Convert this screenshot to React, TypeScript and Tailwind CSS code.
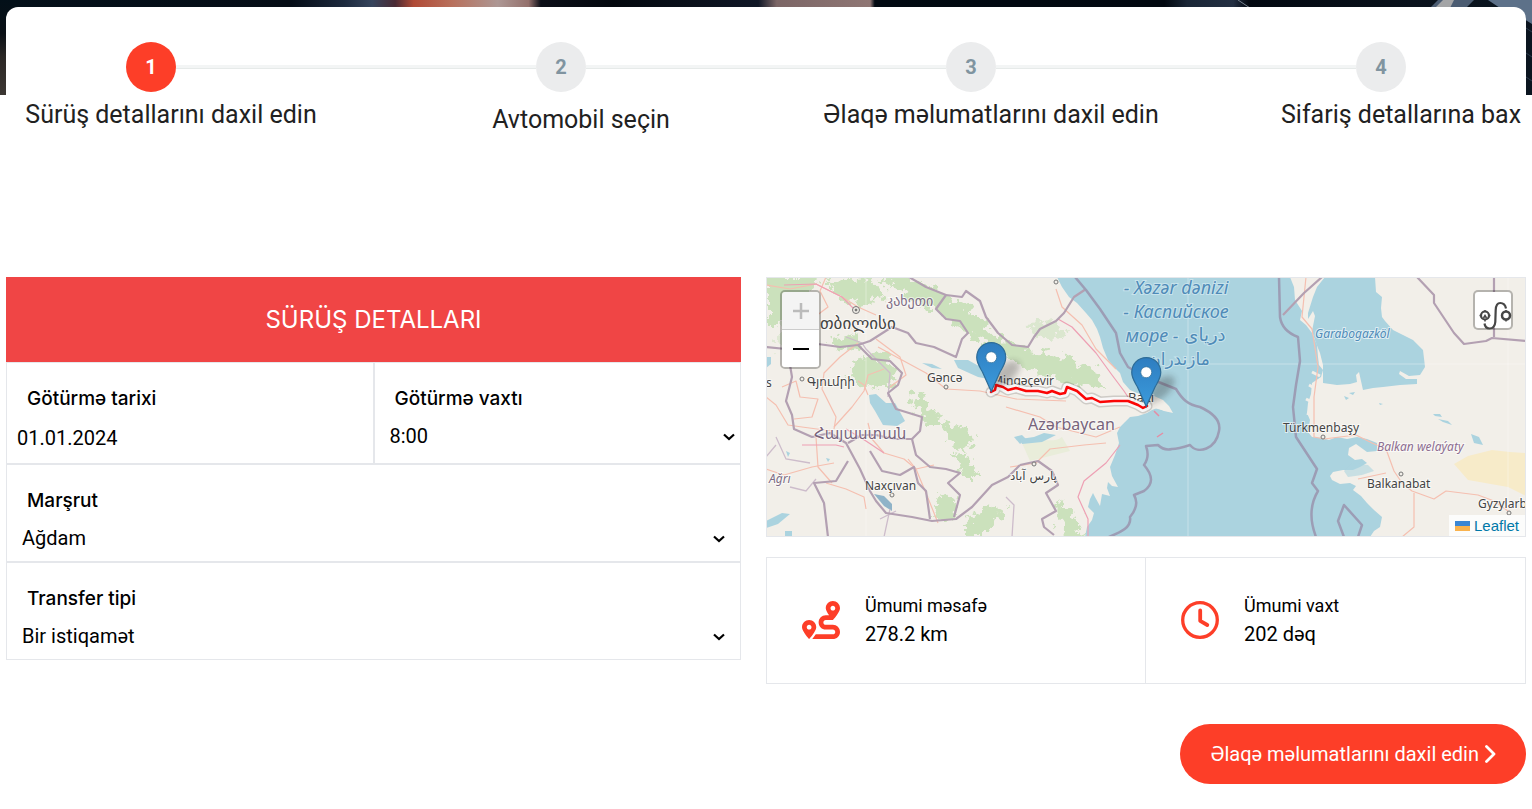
import React, { Fragment } from "react";
import { FaRoute } from "react-icons/fa";

const STEPS = [
  { id: 1, label: "Sürüş detallarını daxil edin", active: true, low: false },
  { id: 2, label: "Avtomobil seçin", active: false, low: true },
  { id: 3, label: "Əlaqə məlumatlarını daxil edin", active: false, low: false },
  { id: 4, label: "Sifariş detallarına bax", active: false, low: false },
];

const ROUTE_PATH =
  "M225 115L229 113 230 108 237 110 242 113 250 111 260 114 272 114 281 116 286 114 294 117 299 116 301 110 311 114 320 122 326 121 334 125 348 124 362 124 372 128 377 131 381 129";

function HeroPhoto() {
  return (
    <svg
      className="absolute inset-x-0 top-0 h-[95px] w-full"
      viewBox="0 0 1532 95"
      preserveAspectRatio="none"
      aria-hidden="true"
    >
      <defs>
        <linearGradient id="cabin" x1="0" x2="1532" y1="0" y2="0" gradientUnits="userSpaceOnUse">
          <stop offset="0" stopColor="#04101a" />
          <stop offset="0.19" stopColor="#050d16" />
          <stop offset="0.225" stopColor="#1d2a3e" />
          <stop offset="0.243" stopColor="#36445c" />
          <stop offset="0.258" stopColor="#4a2a34" />
          <stop offset="0.27" stopColor="#b04a36" />
          <stop offset="0.295" stopColor="#b8705c" />
          <stop offset="0.325" stopColor="#ad9794" />
          <stop offset="0.345" stopColor="#94706c" />
          <stop offset="0.353" stopColor="#0c0f18" />
          <stop offset="0.4" stopColor="#03080e" />
          <stop offset="0.495" stopColor="#101726" />
          <stop offset="0.507" stopColor="#7c6666" />
          <stop offset="0.568" stopColor="#8f7674" />
          <stop offset="0.571" stopColor="#020a12" />
          <stop offset="0.76" stopColor="#020810" />
          <stop offset="0.775" stopColor="#1a2636" />
          <stop offset="0.805" stopColor="#232f42" />
          <stop offset="0.815" stopColor="#020810" />
          <stop offset="0.92" stopColor="#0a121c" />
          <stop offset="1" stopColor="#0b1520" />
        </linearGradient>
        <linearGradient id="seat" x1="0" x2="0" y1="0" y2="95" gradientUnits="userSpaceOnUse">
          <stop offset="0" stopColor="#031019" />
          <stop offset="0.35" stopColor="#0a1016" />
          <stop offset="0.6" stopColor="#2b2725" />
          <stop offset="1" stopColor="#3c3733" />
        </linearGradient>
      </defs>
      <rect width="1532" height="95" fill="url(#cabin)" />
      <rect width="20" height="95" fill="url(#seat)" />
      <path d="M1430 8L1438 0H1474L1466 8Z" fill="#4b5c72" />
      <path d="M1435 8L1443 0H1454L1450 8Z" fill="#a3a4a6" />
      <path d="M1488 0H1532V24L1516 14 1500 8Z" fill="#5d7189" />
      <path d="M1526 28l6 4M1526 53l6 4M1526 77l6 4" stroke="#2c3b4c" strokeWidth="1" />
      <path d="M1238 0l12 8" stroke="#76808c" strokeWidth="1" />
    </svg>
  );
}

function Stepper() {
  return (
    <ol className="flex items-start px-[120px]">
      {STEPS.map((s, i) => (
        <Fragment key={s.id}>
          {i > 0 && (
            <li aria-hidden="true" className="mt-[23px] h-1 flex-1 border-b border-[#e6eae9] bg-[#f3f5f5]" />
          )}
          <li className="flex w-[50px] flex-col items-center">
            <span
              className={
                s.active
                  ? "flex size-[50px] items-center justify-center rounded-full bg-[#fd3e28] text-xl font-bold text-white"
                  : "flex size-[50px] items-center justify-center rounded-full bg-[#ebeced] text-xl font-bold text-[#8094a0]"
              }
            >
              {s.id}
            </span>
            <span
              className={
                s.low
                  ? "mt-3 pl-10 text-[25px] leading-8 whitespace-nowrap text-[#212121]"
                  : "mt-[7px] pl-10 text-[25px] leading-8 whitespace-nowrap text-[#212121]"
              }
            >
              {s.label}
            </span>
          </li>
        </Fragment>
      ))}
    </ol>
  );
}

type SelectFieldProps = { id: string; label: string; options: string[]; wide?: boolean };

function SelectField({ id, label, options, wide }: SelectFieldProps) {
  return (
    <div className={wide ? "border border-[#e5e7eb] px-[15px] pt-[21px] pb-[6px]" : "border border-[#e5e7eb] pr-[5px] pl-[15px] pt-[21px] pb-2"}>
      <label htmlFor={id} className="block pl-[5px] font-['Inter'] text-[19px] leading-[30px] font-medium">
        {label}
      </label>
      <div className="relative mt-[5px]">
        <select id={id} className="block h-[34px] w-full appearance-none bg-white text-xl">
          {options.map((o) => (
            <option key={o}>{o}</option>
          ))}
        </select>
        <svg
          viewBox="0 0 12 8"
          className="pointer-events-none absolute top-[14px] right-0 h-2 w-3"
          fill="none"
          stroke="#000"
          aria-hidden="true"
        >
          <path d="M1 1.500L6 6 11 1.500" strokeWidth="2.200" />
        </svg>
      </div>
    </div>
  );
}

function RideDetails() {
  return (
    <section>
      <h2 className="bg-[#f04545] py-6 text-center font-['Inter'] text-2xl leading-[37px] text-white">
        SÜRÜŞ DETALLARI
      </h2>
      <form className="text-black">
        <div className="grid grid-cols-2">
          <div className="border border-[#e5e7eb] px-[10px] pt-[21px] pb-2">
            <label htmlFor="date" className="block pl-[10px] font-['Inter'] text-[19px] leading-[30px] font-medium">
              Götürmə tarixi
            </label>
            <input id="date" type="text" defaultValue="01.01.2024" className="mt-[7px] block h-[34px] w-full text-xl" />
          </div>
          <SelectField id="time" label="Götürmə vaxtı" options={["8:00", "9:00", "10:00"]} />
        </div>
        <SelectField id="route" label="Marşrut" options={["Ağdam", "Gəncə"]} wide />
        <SelectField id="type" label="Transfer tipi" options={["Bir istiqamət", "İki istiqamət"]} wide />
      </form>
    </section>
  );
}

function Marker({ x, y }: { x: number; y: number }) {
  return (
    <g transform={`translate(${x} ${y}) scale(1.22)`}>
      <path d="M12.5 40.5L17 24c5-7 12-10 17-8 5 3-1 13-9 18z" fill="#222" opacity="0.28" filter="url(#soft)" />
      <path
        d="M12.5.5C5.7.5.6 5.900.6 12.600c0 5 2.800 8.400 4.700 12L12.500 40.500l7.200-15.900c1.900-3.600 4.700-7 4.700-12C24.400 5.900 19.300.5 12.500.5z"
        fill="url(#pin)"
        stroke="#2e6c97"
      />
      <circle cx="12.500" cy="12.500" r="4.500" fill="#fff" stroke="#2e6c97" strokeWidth="0.600" />
    </g>
  );
}

function MapDrawing() {
  return (
    <svg
      className="block h-full w-full font-['Noto_Sans']"
      viewBox="1 1 758 258"
      preserveAspectRatio="xMidYMid slice"
      role="img"
      aria-label="Leaflet"
    >
      <defs>
        <linearGradient id="pin" x1="0" x2="0" y1="0" y2="1">
          <stop offset="0" stopColor="#2e7dc0" />
          <stop offset="1" stopColor="#3b9bdc" />
        </linearGradient>
        <filter id="soft" x="-50%" y="-50%" width="200%" height="200%">
          <feGaussianBlur stdDeviation="2.500" />
        </filter>
        <filter id="rough" x="-5%" y="-5%" width="110%" height="110%">
          <feTurbulence type="fractalNoise" baseFrequency="0.120" numOctaves="4" seed="4" />
          <feDisplacementMap in="SourceGraphic" scale="22" xChannelSelector="R" yChannelSelector="G" />
        </filter>
      </defs>
      <rect width="760" height="260" fill="#f2efe9" />

      <g fill="#c5dfb5" opacity="0.850" filter="url(#rough)">
        <path d="M0 0H52L46 16 28 20 18 44 6 52 0 50Z" />
        <path d="M62 4L104 2 120 20 100 28 74 22Z" />
        <path d="M110 0H150L186 22 210 36 232 60 262 74 300 80 330 92 340 112 300 106 262 94 236 78 204 58 170 36 140 18Z" />
        <path d="M18 42L40 32 48 62 30 78 8 70Z" opacity="0.500" />
        <path d="M64 64L92 54 96 70 70 74Z" />
        <path d="M84 86L118 76 132 92 126 108 104 112 86 104Z" />
        <path d="M142 122L156 112 166 132 178 146 160 146Z" />
        <path d="M176 146L200 150 208 164 196 176 184 166Z" />
        <path d="M188 176L206 182 214 200 198 200Z" />
        <path d="M170 218L190 224 188 246 168 240Z" />
        <path d="M200 244L226 228 240 232 220 258H200Z" />
        <path d="M290 224L304 230 316 260H296Z" />
        <path d="M264 46L290 44 302 60 270 62Z" opacity="0.600" />
      </g>
      <path d="M256 166c14-8 30 2 40-6l8 14-40 10z" fill="#e9edda" />

      <path
        fill="#abd3df"
        d="M291 0L296 10 303 20 311 26 320 36 326 43 331 52 334 60 337 71 342 83 348 90 354 96 357 105 364 113 371 116 379 118 388 119 397 123 403 129 407 136 398 134 391 131 386 133 381 136 372 139 364 140 359 145 354 150 351 156 353 166 349 178 344 190 346 199 352 210 346 209 342 205 341 211 344 219 336 217 334 229 329 220 327 216 324 222 322 230 328 236 326 243 321 250 319 260H604L608 254 614 250 616 240 608 233 601 226 595 219 587 213 590 209 584 206 574 207 566 203 564 199 567 195 577 193 587 193 594 190 601 186 596 182 589 183 582 178 583 171 590 167 601 175 611 174 611 166 601 162 591 160 581 162 571 160 563 163 556 161 546 160 542 155 544 143 541 136 542 126 545 117 546 106 555 100 557 93 553 88 552 80 551 68 546 56 540 48 534 43 536 34 529 23 528 10 524 0Z"
      />
      <path
        fill="#abd3df"
        d="M559 0L551 10 547 20 542 36 542 42 547 34 549 39 546 54 550 66 554 76 557 88 557 106 571 108 584 107 591 105 590 98 593 95 597 113 607 111 617 110 634 108 651 107 651 102 640 102 633 97 634 94 643 99 654 98 659 90 657 73 647 63 637 58 627 53 619 44 616 40 615 31 616 20 610 15 609 0Z"
      />
      <path d="M380 122L388 122 398 127 405 135 396 133 388 131 381 134 374 128Z" fill="#f2efe9" />
      <g fill="#abd3df">
        <path d="M103 118l7-1 10 9 9 0 10 18-8 5-14-1-8-14-5-8z" />
        <path d="M188 83l14 0 18 10 8 10-16-3-20-9z" />
        <path d="M156 86l10 1 10 5-10-1z" />
        <path d="M0 244l16-8 8 1-12 10-12 4z" />
        <path d="M108 217l10 2 8 8 0 7-8-5z" fill="#8fb3c8" />
        <path d="M248 160l8-2 4 4-6 5z" />
        <path d="M254 162l14-2 10-4 12 2-14 7-20 2z" />
        <path d="M0 80h5v7l-5 4zM20 174l4 2-2 4zM60 181l4 1-2 3zM19 254h7v5h-7z" />
        <path d="M578 119l5 2-3 2zM583 116l6-1-2 3zM613 126l4 1-3 1zM667 137h7l2 3-7-1zM672 142l10 2 4 4-9-3zM705 157l8 3 4 8-9-2z" />
        <path d="M586 186l16 2 6 6-12 4-14 2-4-6z" opacity="0.600" />
      </g>
      <path d="M688 187l14-8 24-6 18 2 16 1v43l-18-9-40-7z" fill="#f7ebc9" />
      <path d="M546 95l8 4M543 108l9 5M540 122l8 4M541 136l7 3" stroke="#f2efe9" strokeWidth="3" />

      <g fill="none" stroke="#fff" opacity="0.350">
        <path d="M422 0V260M420 87H760M742 0V260M100 0V260" />
      </g>

      <g fill="none" stroke="#f5bfb0" strokeWidth="1.200" strokeLinejoin="round">
        <path d="M0 8L24 12 50 7 76 20 92 30 110 38" />
        <path d="M60 0L54 14 62 30 46 42 30 50 18 66" />
        <path d="M92 66L74 80 58 96 56 112 70 140 68 152" />
        <path d="M16 110L30 104 34 120 52 122 46 140 28 142" />
        <path d="M68 150L86 130 98 114 102 98 118 92" />
        <path d="M102 118l-4-10-6-4M102 146l4 16 12 14 20 6 12 10 18-4" />
        <path d="M0 120L10 128 22 148 36 150 66 154M0 192L18 198 46 190 68 186" />
        <path d="M60 206L80 212 98 220 100 232M50 160L52 190 66 206" />
        <path d="M110 62L134 80 140 98 124 110M112 70L160 96 180 112 214 114 250 122 300 124" />
        <path d="M142 182L150 192 164 226 172 246M240 130L274 140 290 150 330 160 354 150" />
        <path d="M244 190L270 186 284 172 318 168 340 166" />
        <path d="M290 12L296 30 316 48 330 72 350 92" />
        <path d="M540 0L536 40 546 52 552 90 548 120 548 160 558 162 590 158 606 166 620 172 628 194 636 206 646 214 668 222 680 214 712 218 728 224 742 234" />
        <path d="M592 202L620 196M648 216L648 250 636 260" />
      </g>
      <g fill="none" stroke="#eea0b4" strokeWidth="1.200" strokeLinejoin="round">
        <path d="M18 8L50 7 76 20 90 34" />
        <path d="M80 152L100 164 118 176M36 168L70 168 78 170" />
        <path d="M292 42L306 50 330 76 346 98 358 114 366 126 382 132" />
        <path d="M354 168L340 186 318 204 312 220 322 242 322 260" />
      </g>
      <g fill="none" stroke="#cdbccb" strokeWidth="1.300">
        <path d="M10 168L0 180M10 160L20 182 44 186M80 60L96 66 100 72 124 96 122 120M24 210L40 214 50 202" />
        <path d="M240 220L248 228 246 260M114 242L130 234M118 260L124 232" />
      </g>

      <g fill="none" stroke="#b3a0b2" strokeWidth="2.200" strokeLinejoin="round">
        <path d="M0 70L20 72 52 67 74 70 92 68 104 64 126 50 142 56 150 66 168 70 190 80 196 62 202 56 194 44 180 42 170 32 180 18 196 20 200 14 214 24 220 40 232 56 246 68 262 70 268 60 274 52 290 44 298 36 308 20 320 12" />
        <path d="M143 0L160 10 180 18" />
        <path d="M24 88L26 100 20 124 26 138 28 152 46 160 64 156 80 166 94 192 104 214 110 224 120 236 146 240 166 244 190 242 206 230 226 208 242 200 254 188" />
        <path d="M92 68L106 82 124 84 136 96 132 108 122 116 130 132 156 140 154 154 146 162 128 162 110 158 96 158 82 166" />
        <path d="M104 174L116 194 134 198 148 190 152 206 160 214 164 242" />
        <path d="M146 162L150 178 164 190 180 192 194 196 182 206 194 218 188 240" />
        <path d="M82 184L70 204 48 206 58 226 62 260" />
        <path d="M254 188L272 184 286 194 292 208 280 216 290 234 276 242 278 250 288 258" />
        <path d="M651 0L668 18 668 26 676 38 688 56 698 67 720 64 726 61 760 64M728 0V60" />
        <path d="M556 0L538 16 517 38" />
      </g>
      <g fill="none" stroke="#9c9db5" strokeWidth="2.500" strokeLinejoin="round">
        <path d="M309 0L320 13 334 32 350 56 354 76 362 90 380 100" />
        <path d="M380 100Q400 108 410 112C416 122 422 128 434 130Q456 140 453 154C450 172 432 178 424 168Q412 172 406 172 398 174 392 168L380 169Q384 180 378 188 392 204 378 214L368 218Q374 228 364 240C366 252 352 256 338 262" />
        <path d="M513 0L514 40Q516 54 532 60L534 84 530 108 527 130 530 160 551 192 546 206 552 214Q540 234 550 260M578 260L572 244 578 228 596 248 592 260" />
      </g>
      <path d="M391 160l6-4M388 134l5 5" stroke="#e58ca4" strokeWidth="1.500" />

      <g fill="#f2efe9" stroke="#777" strokeWidth="1">
        <circle cx="90" cy="33" r="3.500" />
        <circle cx="90" cy="33" r="1" fill="#555" />
        <circle cx="36" cy="102" r="2" />
        <circle cx="180" cy="110" r="2" />
        <circle cx="126" cy="218" r="2" />
        <circle cx="290" cy="5" r="2" />
        <circle cx="268" cy="187" r="2" />
        <circle cx="557" cy="160" r="2" />
        <circle cx="635" cy="197" r="2" />
        <circle cx="743" cy="236" r="2" />
      </g>

      <g fill="#444" stroke="#fff" strokeOpacity="0.600" strokeWidth="2" paintOrder="stroke" fontSize="12">
        <text x="54" y="52" fontSize="17" fontFamily="'DejaVu Sans', sans-serif">თბილისი</text>
        <text x="120" y="29" fontSize="14" fill="#7d6c84" fontFamily="'DejaVu Sans', sans-serif">კახეთი</text>
        <text x="41" y="109" fontFamily="'DejaVu Sans', sans-serif">Գյումրի</text>
        <text x="0" y="110">s</text>
        <text x="161" y="105">Gəncə</text>
        <text x="226" y="108">Mingəçevir</text>
        <text x="99" y="213">Naxçıvan</text>
        <text x="244" y="203" fontFamily="'DejaVu Sans', sans-serif">پارس آباد</text>
        <text x="362" y="125" fontSize="13">Bakı</text>
        <text x="517" y="155">Türkmenbaşy</text>
        <text x="601" y="211">Balkanabat</text>
        <text x="712" y="231">Gyzylarb</text>
        <text x="3" y="206" fontStyle="italic" fill="#7d6c84">Ağrı</text>
        <text x="611" y="174" fontStyle="italic" fill="#8d6d90">Balkan welaýaty</text>
        <text x="549" y="61" fontStyle="italic" fill="#4f8bb8">Garabogazköl</text>
        <text x="48" y="162" fontSize="15" fill="#78647c" fontFamily="'DejaVu Sans', sans-serif">Հայաստան</text>
        <text x="262" y="153" fontSize="16" fill="#78647c">Azərbaycan</text>
      </g>
      <g fill="#4f8bb8" stroke="#c8e3ec" strokeWidth="2" paintOrder="stroke" fontSize="18" fontStyle="italic" textAnchor="middle">
        <text x="410" y="17">- Xəzər dənizi</text>
        <text x="410" y="41">- Каспийское</text>
        <text x="386" y="65">море -</text>
        <text x="439" y="64" fontStyle="normal" fontFamily="'DejaVu Sans', sans-serif">دریای</text>
        <text x="413" y="88" fontSize="17" fontStyle="normal" fontFamily="'DejaVu Sans', sans-serif">مازندران</text>
      </g>

      <g fill="none" strokeLinejoin="round" strokeLinecap="round">
        <path d={ROUTE_PATH} stroke="#000" strokeOpacity="0.150" strokeWidth="11" />
        <path d={ROUTE_PATH} stroke="#fff" strokeOpacity="0.850" strokeWidth="8" />
        <path d={ROUTE_PATH} stroke="#fb0505" strokeWidth="2.500" />
      </g>
      <Marker x={210} y={65} />
      <Marker x={365} y={80} />
    </svg>
  );
}

function RouteMap() {
  return (
    <div className="relative h-[260px] overflow-hidden border border-[#e5e7eb]">
      <MapDrawing />
      <div className="absolute top-3 left-[13px] w-[41px] overflow-hidden rounded-[5px] border-2 border-black/25 bg-clip-padding">
        <button type="button" aria-label="Yaxınlaşdır" className="flex h-[38px] w-full items-center justify-center border-b border-[#ccc] bg-[#f4f4f4]">
          <svg viewBox="0 0 16 16" className="size-4" aria-hidden="true">
            <path d="M8 0V16M0 8H16" stroke="#bbb" strokeWidth="2.500" />
          </svg>
        </button>
        <button type="button" aria-label="Uzaqlaşdır" className="flex h-[37px] w-full items-center justify-center bg-white">
          <svg viewBox="0 0 16 16" className="size-4" aria-hidden="true">
            <path d="M0 8H16" stroke="#000" strokeWidth="2" />
          </svg>
        </button>
      </div>
      <button
        type="button"
        aria-label="Marşrut"
        className="absolute top-3 right-3 size-10 rounded-[5px] border-2 border-black/25 bg-white bg-clip-padding"
      >
        <svg viewBox="0 0 36 36" className="size-9 overflow-visible" fill="none" stroke="#464646" aria-hidden="true">
          <circle cx="10" cy="23.500" r="4" strokeWidth="2.200" />
          <path d="M10 18v2M10 27v2.500M4.500 23.500h2M13.500 23.500h2M8.500 26l1.500-2.500 1.500 2.500" strokeWidth="1.500" />
          <path d="M9.500 31.500c.5 3.500 2.500 5 5 5 4 0 5.500-2.500 5.800-6.500l.4-12c.2-4.500 1.300-7 4.600-7 3.200 0 5 2 5.700 5.500" strokeWidth="2.200" />
          <circle cx="31" cy="23.500" r="4" strokeWidth="2.500" />
          <path d="M31 18v2M31 27v2.500" strokeWidth="1.500" />
        </svg>
      </button>
      <div className="absolute right-0 bottom-0 flex items-center gap-1 bg-white/80 px-[6px] font-['Liberation_Sans'] text-[15px] leading-[21px]">
        <svg viewBox="0 0 15 10" className="h-[10px] w-[15px]" aria-hidden="true">
          <path fill="#3a86d4" d="M0 0h15v5H0z" />
          <path fill="#f9b24d" d="M0 5h15v5H0z" />
        </svg>
        <a href="https://leafletjs.com" className="text-[#0078a8]">
          Leaflet
        </a>
      </div>
    </div>
  );
}

function ClockIcon() {
  return (
    <svg viewBox="0 0 38 38" className="size-[38px]" fill="none" stroke="currentColor" aria-hidden="true">
      <circle cx="19" cy="19" r="17.300" strokeWidth="3.300" />
      <path d="M19.200 9.500V19.800L26.300 24" strokeWidth="3.800" strokeLinecap="round" strokeLinejoin="round" />
    </svg>
  );
}

function Stat({ icon, label, value }: { icon: React.ReactNode; label: string; value: string }) {
  return (
    <div className="flex items-center gap-[25px] pt-[34px] pb-[35px] pl-[35px]">
      <span className="text-[#fd3e28]">{icon}</span>
      <div className="text-black">
        <p className="text-lg leading-7">{label}</p>
        <p className="text-xl leading-7">{value}</p>
      </div>
    </div>
  );
}

export default function App() {
  return (
    <div className="relative bg-white font-['Roboto'] text-[#212121]">
      <HeroPhoto />
      <main className="relative px-[6px] pt-[7px]">
        <div className="rounded-t-xl bg-white pt-[35px] pb-[141px]">
          <Stepper />
        </div>
        <div className="grid grid-cols-[735fr_760fr] items-start gap-[25px]">
          <RideDetails />
          <section>
            <RouteMap />
            <div className="mt-5 grid grid-cols-2 divide-x divide-[#e5e7eb] border border-[#e5e7eb]">
              <Stat icon={<FaRoute className="size-[38px]" aria-hidden="true" />} label="Ümumi məsafə" value="278.2 km" />
              <Stat icon={<ClockIcon />} label="Ümumi vaxt" value="202 dəq" />
            </div>
            <div className="mt-10 flex justify-end pb-6">
              <button type="button" className="flex h-[60px] items-center gap-[6px] rounded-full bg-[#fd3e28] pr-[30px] pl-[31px] text-xl text-white">
                Əlaqə məlumatlarını daxil edin
                <svg viewBox="0 0 11 18" className="h-[18px] w-[11px]" fill="none" stroke="currentColor" aria-hidden="true">
                  <path d="M1.500 1.500L9 9 1.500 16.500" strokeWidth="2.800" strokeLinecap="round" strokeLinejoin="round" />
                </svg>
              </button>
            </div>
          </section>
        </div>
      </main>
    </div>
  );
}
